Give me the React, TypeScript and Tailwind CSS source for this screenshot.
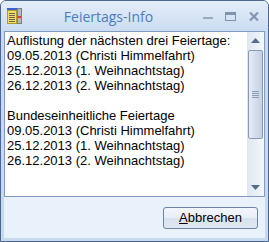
import React from 'react';

const text = [
  'Auflistung der nächsten drei Feiertage:',
  '09.05.2013 (Christi Himmelfahrt)',
  '25.12.2013 (1. Weihnachtstag)',
  '26.12.2013 (2. Weihnachtstag)',
  '',
  'Bundeseinheitliche Feiertage',
  '09.05.2013 (Christi Himmelfahrt)',
  '25.12.2013 (1. Weihnachtstag)',
  '26.12.2013 (2. Weihnachtstag)',
].join('\n');

function AppIcon() {
  return (
    <svg width="16" height="16" viewBox="0 0 16 16" shapeRendering="crispEdges">
      <rect x="0" y="0" width="10" height="2" fill="#3b63c9" />
      <rect x="0.5" y="2.5" width="9" height="13" fill="#f1dc6a" stroke="#b49a2a" />
      {[5, 7, 9, 11, 13].map((y) => (
        <rect key={y} x="2" y={y} width="6" height="1" fill="#6b6650" />
      ))}
      <rect x="10.5" y="0.5" width="4" height="15" fill="#b4b9c0" stroke="#7b8088" />
      <rect x="11" y="8" width="3" height="2" fill="#d23c3c" />
    </svg>
  );
}

function CaptionButtons() {
  return (
    <div className="flex h-full items-center">
      <div className="flex w-[23px] justify-center">
        <svg width="10" height="10" viewBox="0 0 10 10" shapeRendering="crispEdges">
          <rect x="0" y="6" width="10" height="2" fill="#98a9c0" />
        </svg>
      </div>
      <div className="flex w-[23px] justify-center">
        <svg width="11" height="9" viewBox="0 0 11 9" shapeRendering="crispEdges">
          <rect x="0.5" y="0.5" width="10" height="8" fill="none" stroke="#7f93b0" />
          <rect x="0" y="0" width="11" height="3" fill="#7f93b0" />
        </svg>
      </div>
      <div className="flex w-[23px] justify-center">
        <svg width="10" height="9" viewBox="0 0 10 9">
          <path d="M1 0.5 L9 8.5 M9 0.5 L1 8.5" stroke="#8396b2" strokeWidth="2.2" />
        </svg>
      </div>
    </div>
  );
}

function ScrollBar() {
  return (
    <div className="flex w-[17px] flex-col bg-gradient-to-r from-[#dfe7f1] to-[#f4f7fb]">
      <div className="flex h-[17px] items-center justify-center">
        <svg width="9" height="5" viewBox="0 0 9 5">
          <path d="M0 5 L4.5 0 L9 5 Z" fill="#566b8c" />
        </svg>
      </div>
      <div className="mx-[1px] mt-[1px] flex h-[89px] items-center justify-center rounded-[2px] border border-[#8799b3] bg-gradient-to-r from-[#e6edf6] via-[#d3deec] to-[#c3d1e3]">
        <div className="flex flex-col gap-[1px]">
          <div className="h-[1px] w-[7px] bg-[#8d9db5]" />
          <div className="h-[1px] w-[7px] bg-[#8d9db5]" />
          <div className="h-[1px] w-[7px] bg-[#8d9db5]" />
          <div className="h-[1px] w-[7px] bg-[#8d9db5]" />
        </div>
      </div>
      <div className="flex-1" />
      <div className="flex h-[17px] items-center justify-center">
        <svg width="9" height="5" viewBox="0 0 9 5">
          <path d="M0 0 L9 0 L4.5 5 Z" fill="#566b8c" />
        </svg>
      </div>
    </div>
  );
}

export default function App() {
  return (
    <div className="flex h-[242px] w-[269px] flex-col overflow-hidden rounded-t-[6px] border border-[#4a6790] bg-[#c7d9ef] font-['Liberation_Sans',Arial,sans-serif]">
      {/* title bar */}
      <div className="flex h-[30px] items-center bg-gradient-to-b from-[#e4edf9] to-[#cbdcf0] pl-[6px] pr-[3px]">
        <AppIcon />
        <div className="flex-1 pr-[2px] text-center font-['Open_Sans',sans-serif] text-[14px] text-[#4b7cbd]">
          Feiertags-Info
        </div>
        <CaptionButtons />
      </div>

      {/* client area */}
      <div className="mx-[3px] flex flex-1 flex-col bg-[#e9f1fb]">
        <div className="flex h-[166px] border border-[#7f9cc0] bg-white">
          <div className="flex-1 whitespace-pre-line pl-[2px] pt-[1px] text-[13px] leading-[15px] text-black">
            {text}
          </div>
          <ScrollBar />
        </div>
        <div className="flex flex-1 items-center justify-end pr-[7px]">
          <button className="h-[22px] w-[95px] rounded-[3px] border border-[#6c83a3] bg-[linear-gradient(#f3f6fa_0%,#e8eef6_50%,#d8e2ee_51%,#dfe7f2_100%)] text-[13px] text-black">
            <span className="underline">A</span>bbrechen
          </button>
        </div>
      </div>
      <div className="h-[3px]" />
    </div>
  );
}
